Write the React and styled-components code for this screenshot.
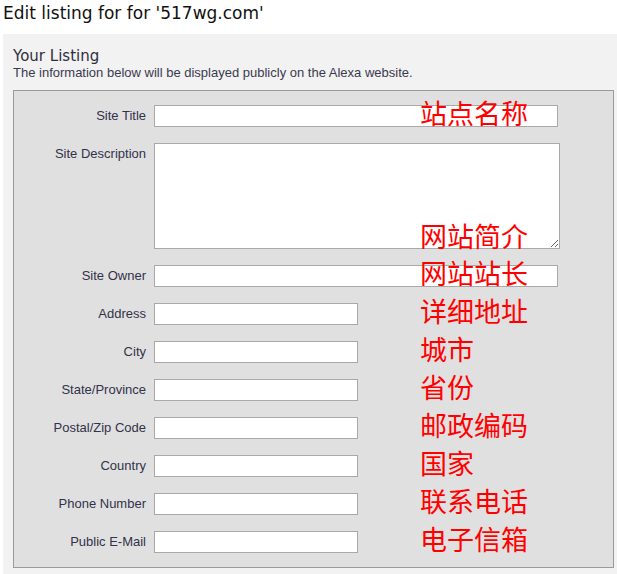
import React from "react";
import styled, { createGlobalStyle } from "styled-components";

const Global = createGlobalStyle`
  html, body { margin: 0; padding: 0; background: #ffffff; }
  body { font-family: "Liberation Sans", Arial, sans-serif; }
`;

const Page = styled.div`
  width: 617px;
  height: 574px;
  overflow: hidden;
`;

const Heading = styled.h1`
  margin: 0;
  padding: 3px 0 0 3px;
  height: 34px;
  box-sizing: border-box;
  font-family: "DejaVu Sans", Verdana, sans-serif;
  font-weight: normal;
  font-size: 17px;
  line-height: 20px;
  color: #111;
`;

const Panel = styled.section`
  margin-left: 3px;
  padding: 14px 3px 12px 10px;
  background: #f2f2f2;
`;

const PanelTitle = styled.h2`
  margin: 0;
  font-family: "DejaVu Sans", Verdana, sans-serif;
  font-weight: normal;
  font-size: 15px;
  line-height: 17px;
  color: #2e2e3e;
`;

const PanelNote = styled.p`
  margin: 0 0 10px;
  font-size: 13px;
  line-height: 15px;
  color: #3a3a4e;
`;

const FormBox = styled.div`
  border: 1px solid #9a9a9a;
  background: #e0e0e0;
  padding: 14px 0 14px 0;
  display: flex;
  flex-direction: column;
  gap: 16px;
`;

const Row = styled.div`
  position: relative;
  display: grid;
  grid-template-columns: 132px auto;
  column-gap: 8px;
  align-items: start;
`;

const Label = styled.label`
  text-align: right;
  font-size: 13px;
  line-height: 15px;
  padding-top: 3px;
  color: #32324a;
`;

const Input = styled.input`
  box-sizing: border-box;
  width: ${(p) => p.$w}px;
  height: 22px;
  margin: 0;
  border: 1px solid #a9a9a9;
  background: #fff;
  padding: 2px 4px;
  font: inherit;
`;

const TextArea = styled.textarea`
  box-sizing: border-box;
  width: 406px;
  height: 106px;
  margin: 0;
  border: 1px solid #a9a9a9;
  background: #fff;
  padding: 2px 4px;
  font: inherit;
  display: block;
`;

const Note = styled.span`
  position: absolute;
  left: 406px;
  ${(p) => (p.$bottom ? "bottom: 0px;" : "top: -6px;")}
  font-family: "Noto Sans CJK SC", sans-serif;
  font-size: 27px;
  line-height: 27px;
  color: #ff0000;
  white-space: nowrap;
  pointer-events: none;
`;

const fields = [
  { label: "Site Title", note: "站点名称", w: 404 },
  { label: "Site Description", note: "网站简介", area: true },
  { label: "Site Owner", note: "网站站长", w: 404 },
  { label: "Address", note: "详细地址", w: 204 },
  { label: "City", note: "城市", w: 204 },
  { label: "State/Province", note: "省份", w: 204 },
  { label: "Postal/Zip Code", note: "邮政编码", w: 204 },
  { label: "Country", note: "国家", w: 204 },
  { label: "Phone Number", note: "联系电话", w: 204 },
  { label: "Public E-Mail", note: "电子信箱", w: 204 },
];

export default function App() {
  return (
    <Page>
      <Global />
      <Heading>Edit listing for for '517wg.com'</Heading>
      <Panel>
        <PanelTitle>Your Listing</PanelTitle>
        <PanelNote>
          The information below will be displayed publicly on the Alexa website.
        </PanelNote>
        <FormBox>
          {fields.map((f) => (
            <Row key={f.label}>
              <Label>{f.label}</Label>
              {f.area ? <TextArea /> : <Input $w={f.w} />}
              <Note $bottom={f.area}>{f.note}</Note>
            </Row>
          ))}
        </FormBox>
      </Panel>
    </Page>
  );
}
